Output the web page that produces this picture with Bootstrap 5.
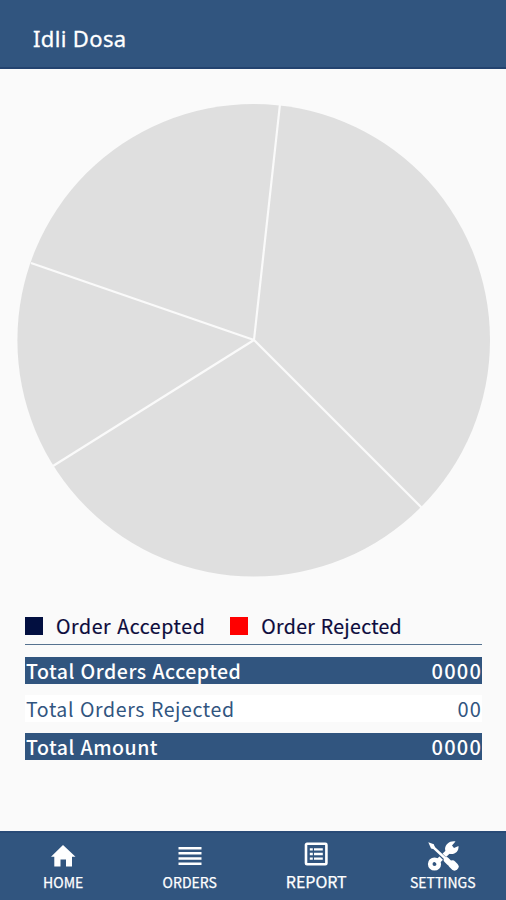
<!DOCTYPE html>
<html lang="en">
<head>
<meta charset="utf-8">
<meta name="viewport" content="width=device-width, initial-scale=1">
<title>Idli Dosa</title>
<link href="https://cdn.jsdelivr.net/npm/bootstrap@5.3.0/dist/css/bootstrap.min.css" rel="stylesheet">
<style>
  :root { --brand: #31557f; --ink: #0c0b3c; }
  body { background: #fafafa; font-family: "Noto Sans CJK JP", "Noto Sans", sans-serif; }
  .screen { height: 900px; }
  .app-bar { height: 69px; background: var(--brand); border-bottom: 2px solid #23436f; padding: 8px 33px 0; }
  .app-title { font-family: "Noto Sans", sans-serif; font-size: 22px; line-height: 30px; letter-spacing: .35px; -webkit-text-stroke: .3px #fff; }
  .chart-wrap { height: 541px; }
  .report { padding: 0 24px 0 25px; font-size: 19.5px; line-height: 28px; letter-spacing: .6px; word-spacing: 1px; }
  .legend { height: 35px; color: var(--ink); border-bottom: 1.5px solid #55728f; padding-bottom: 3px; margin-bottom: 12px; -webkit-text-stroke: .2px var(--ink); }
  .swatch { width: 18px; height: 18px; margin-right: 13px; }
  .swatch-accepted { background: #020f40; }
  .swatch-rejected { background: #f00; }
  .legend-item + .legend-item { margin-left: 25px; letter-spacing: .3px; }
  .total { height: 27px; padding-left: 1px; color: var(--brand); background: #fff; margin-bottom: 11px; }
  .total-filled { background: var(--brand); color: #fff; font-weight: 500; letter-spacing: .5px; }
  .total .amount { font-size: 20px; letter-spacing: 1.2px; }
  .tab-bar { height: 69px; background: var(--brand); border-top: 2px solid #294b77; }
  .tab { color: #fff; font-size: 14px; line-height: 20px; letter-spacing: .02px; -webkit-text-stroke: .25px #fff; }
  .tab svg { height: 32px; width: 34px; margin-top: 7px; display: block; }
  .tab-lg { font-size: 16px; letter-spacing: -.05px; line-height: 19px; }
</style>
</head>
<body>
<div class="screen d-flex flex-column overflow-hidden">
  <header class="app-bar d-flex align-items-center text-white"><h1 class="app-title fw-normal m-0">Idli Dosa</h1></header>
  <main class="flex-grow-1">
    <div class="chart-wrap">
      <svg class="d-block" width="506" height="541" viewBox="0 69 506 541" role="img" aria-label="Orders chart">
        <circle cx="253.7" cy="340.2" r="236.3" fill="#dfdfdf"/>
        <path d="M254 340L280 104M254 340L31 263M254 340L53 466M254 340L422 508" stroke="#fafafa" stroke-width="2.2"/>
      </svg>
    </div>
    <section class="report">
      <div class="legend d-flex align-items-center">
        <div class="legend-item d-flex align-items-center"><span class="swatch swatch-accepted"></span><span>Order Accepted</span></div>
        <div class="legend-item d-flex align-items-center"><span class="swatch swatch-rejected"></span><span>Order Rejected</span></div>
      </div>
      <div class="total total-filled d-flex justify-content-between"><span>Total Orders Accepted</span><span class="amount">0000</span></div>
      <div class="total d-flex justify-content-between"><span>Total Orders Rejected</span><span class="amount">00</span></div>
      <div class="total total-filled d-flex justify-content-between"><span>Total Amount</span><span class="amount">0000</span></div>
    </section>
  </main>
  <nav class="tab-bar row g-0 flex-shrink-0">
    <a class="tab col d-flex flex-column align-items-center text-decoration-none" href="#">
      <svg viewBox="0 0 34 32" fill="#fff"><path d="M17 5L5 16.8H8.3V26.500H14.5V19.5H20V26.500H26V16.8H29.5Z"/></svg><span>HOME</span></a>
    <a class="tab col d-flex flex-column align-items-center text-decoration-none" href="#">
      <svg viewBox="0 0 34 32" fill="none" stroke="#fff" stroke-width="2.6"><path d="M5.5 8.3H28.5M5.5 13.3H28.5M5.5 18.5H28.5M5.5 23.7H28.5"/></svg><span>ORDERS</span></a>
    <a class="tab tab-lg col d-flex flex-column align-items-center text-decoration-none" href="#">
      <svg viewBox="0 0 34 32" fill="none" stroke="#fff" stroke-width="2.6"><rect x="7" y="3.8" width="20.4" height="20.4" rx="1"/><path stroke-width="2.4" d="M10.8 9.4H13.8M15 9.4H23.8M10.8 14H13.8M15 14H23.8M10.8 18.6H13.8M15 18.6H23.8"/></svg><span>REPORT</span></a>
    <a class="tab col d-flex flex-column align-items-center text-decoration-none" href="#">
      <svg viewBox="0 0 34 32" fill="none" stroke="#fff" stroke-linecap="round">
        <path stroke-width="5" stroke-linecap="butt" d="M10 23L24 10"/>
        <circle cx="8.5" cy="24" r="4.3" stroke-width="4.6"/>
        <path fill="#fff" stroke="none" d="M19 9C19.5 4 24 .5 29.5 1.5L26 5.5L28 8L32.5 6C33 11.5 29 14.500 24.5 14L20 13Z"/>
        <path stroke="#31557f" stroke-width="4" stroke-linecap="butt" d="M7 7L22 22"/>
        <path fill="#fff" stroke="none" d="M2.3 2.2L7.8 4.3L9.8 9.5L5 8.5Z"/>
        <path stroke-width="2.4" d="M7 7L22 21"/>
        <path stroke-width="5.500" d="M20.5 20L23 22.5"/>
        <path stroke-width="8" d="M26.5 24.5L28.500 26.500"/>
      </svg><span>SETTINGS</span></a>
  </nav>
</div>
<script src="https://cdn.jsdelivr.net/npm/bootstrap@5.3.0/dist/js/bootstrap.bundle.min.js"></script>
</body>
</html>
